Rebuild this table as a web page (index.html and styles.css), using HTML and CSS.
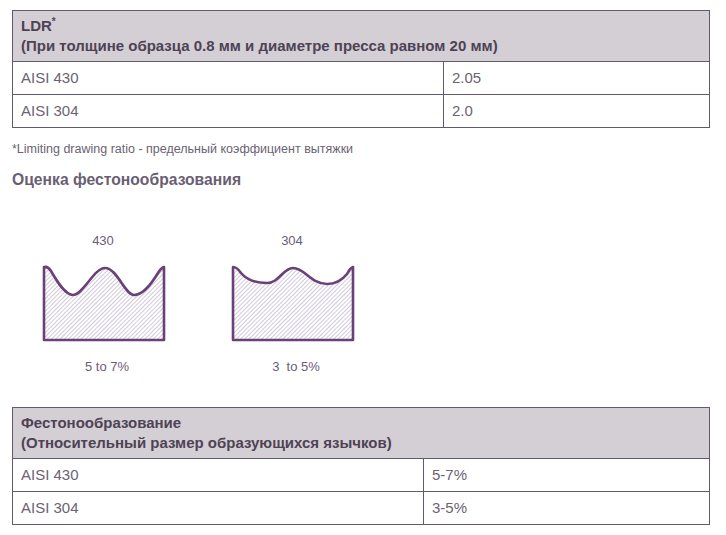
FILE: index.html
```html
<!DOCTYPE html>
<html lang="ru">
<head>
<meta charset="utf-8">
<link rel="stylesheet" href="styles.css">
</head>
<body>
<div class="page">
  <table class="data">
    <tr class="head"><th colspan="2">LDR<sup>*</sup><br>(При толщине образца 0.8 мм и диаметре пресса равном 20 мм)</th></tr>
    <tr><td class="c1">AISI 430</td><td>2.05</td></tr>
    <tr><td class="c1">AISI 304</td><td>2.0</td></tr>
  </table>
  <p class="note">*Limiting drawing ratio - предельный коэффициент вытяжки</p>
  <h3 class="title">Оценка фестонообразования</h3>
  <div class="figs">
    <div class="fig">
      <div class="fig-label">430</div>
      <svg class="shape" width="124" height="80" viewBox="0 0 124 80">
        <defs>
          <pattern id="hatch" patternUnits="userSpaceOnUse" width="3" height="3" patternTransform="rotate(45)">
            <line x1="0" y1="0" x2="0" y2="3" stroke="#b3a5bd" stroke-width="1.2"/>
          </pattern>
        </defs>
        <path d="M2,4 Q6,3 9,8 C17,22 24,32 31,32 C41,32 52,5 63,5 C75,5 83,32 92,32 C101,32 110,20 116,10 Q119,5 122,4 L122,77 L2,77 Z" fill="url(#hatch)" stroke="#6a4079" stroke-width="2.6" stroke-linejoin="round"/>
      </svg>
      <div class="fig-cap">5 to 7%</div>
    </div>
    <div class="fig">
      <div class="fig-label">304</div>
      <svg class="shape" width="124" height="80" viewBox="0 0 124 80">
        <path d="M2,4 Q6,4 10,10 C16,17 26,20 36,20 C48,20 52,5 62,5 C74,5 80,21 96,21 C106,21 112,16 116,11 Q119,5 122,4 L122,77 L2,77 Z" fill="url(#hatch)" stroke="#6a4079" stroke-width="2.6" stroke-linejoin="round"/>
      </svg>
      <div class="fig-cap">3&nbsp; to 5%</div>
    </div>
  </div>
  <table class="data second">
    <tr class="head"><th colspan="2">Фестонообразование<br>(Относительный размер образующихся язычков)</th></tr>
    <tr><td class="c2">AISI 430</td><td>5-7%</td></tr>
    <tr><td class="c2">AISI 304</td><td>3-5%</td></tr>
  </table>
</div>
</body>
</html>
```

FILE: styles.css
```css
html, body {
  margin: 0;
  padding: 0;
  background: #ffffff;
}
body {
  font-family: "Liberation Sans", Arial, sans-serif;
  font-size: 15px;
  color: #6b6372;
}
.page {
  padding: 10px 0 0 12px;
}
.data {
  width: 698px;
  border-collapse: collapse;
  border: 1px solid #625a6a;
}
.data th {
  background: #d4cfd5;
  color: #4d4354;
  font-weight: bold;
  text-align: left;
  padding: 5px 8px 5px 8px;
  line-height: 20px;
  border-bottom: 1px solid #625a6a;
}
.data th sup {
  font-size: 10px;
  line-height: 0;
  vertical-align: 6px;
}
.data td {
  padding: 6px 8px;
  line-height: 20px;
  border-top: 1px solid #625a6a;
  border-left: 1px solid #625a6a;
}
.data td.c1 { width: 414px; border-left: none; }
.data td.c2 { width: 394px; border-left: none; }
.note {
  margin: 14px 0 0 0;
  font-size: 12.5px;
  line-height: 14px;
  color: #6b6372;
}
.title {
  margin: 14px 0 0 0;
  font-size: 15.7px;
  line-height: 20px;
  font-weight: bold;
  color: #6a5f72;
}
.figs {
  display: flex;
  gap: 65px;
  padding-left: 30px;
  margin-top: 43px;
}
.fig {
  display: flex;
  flex-direction: column;
  align-items: center;
  width: 124px;
  color: #6b5c78;
  font-size: 13px;
}
.fig-label {
  line-height: 16px;
  padding-right: 2px;
}
.shape {
  display: block;
  margin-top: 14px;
}
.fig-cap {
  margin-top: 16px;
  line-height: 16px;
  padding-left: 6px;
}
.second {
  margin-top: 32px;
}
```
